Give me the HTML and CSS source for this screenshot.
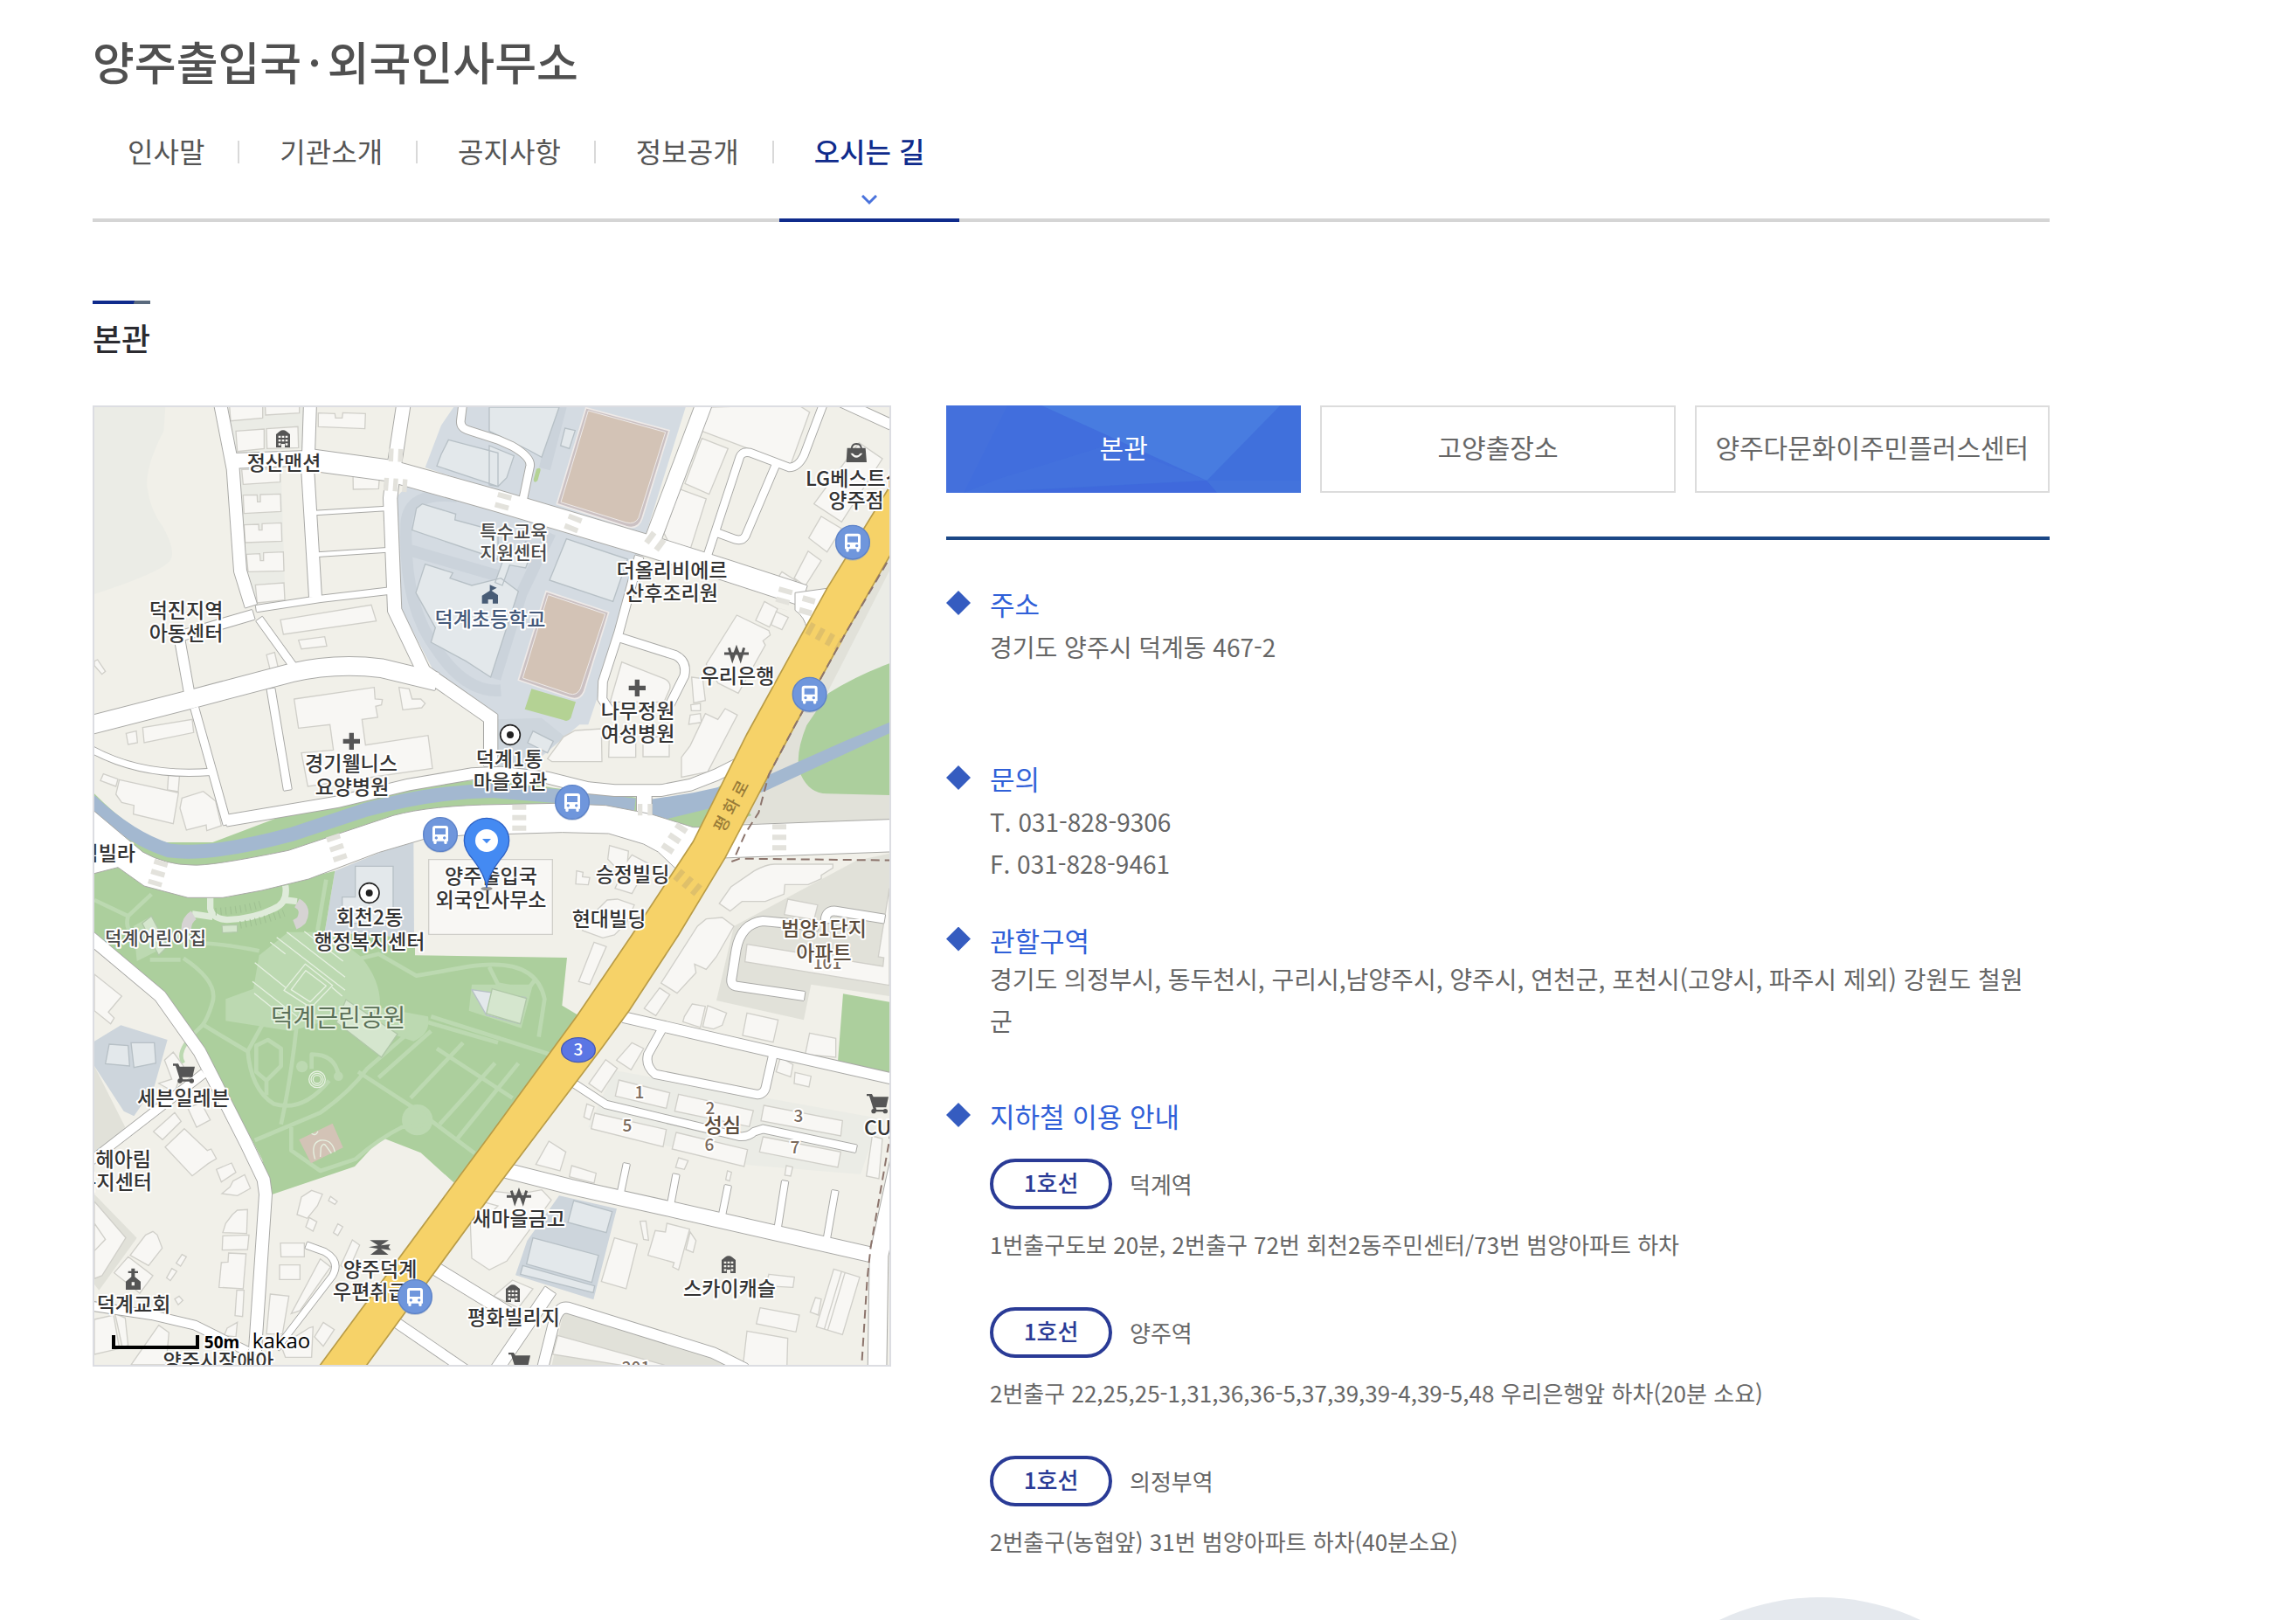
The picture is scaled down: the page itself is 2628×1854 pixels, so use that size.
FILE: index.html
```html
<!DOCTYPE html>
<html lang="ko">
<head>
<meta charset="utf-8">
<meta name="viewport" content="width=device-width, initial-scale=1">
<title>양주출입국·외국인사무소 - 오시는 길</title>
<link rel="stylesheet" href="styles.css">
</head>
<body>
<div class="page">
  <header class="page-header">
    <h1 class="page-title">양주출입국<span class="title-dot">·</span>외국인사무소</h1>
    <nav class="tabs" aria-label="사무소 메뉴">
      <a class="tab" href="#greeting">인사말</a>
      <a class="tab" href="#about">기관소개</a>
      <a class="tab" href="#notice">공지사항</a>
      <a class="tab" href="#open">정보공개</a>
      <a class="tab tab-active" href="#location" aria-current="page">오시는 길
        <svg class="tab-arrow" viewBox="0 0 18 12" aria-hidden="true"><path d="M1 1l8 8 8-8"/></svg>
      </a>
    </nav>
  </header>

  <main>
    <h2 class="section-title">본관</h2>
    <div class="location">
      <div class="map">
        <svg class="map-canvas" viewBox="8 6 910 1096" role="img" aria-label="양주출입국·외국인사무소 약도">
          <defs>
            <g id="bus">
              <circle class="bus-shadow" cy="3" r="60"/>
              <circle class="bus-disc" r="58"/>
              <path class="bus-body" fill-rule="evenodd" d="M-18-30h36q9 0 9 9v44h-4v6q0 4-5 4t-5-4v-6h-26v6q0 4-5 4t-5-4v-6h-4v-44q0-9 9-9zM-18-21v21h36v-21zM-14 7a5 5 0 1 0 .1 0zM14 7a5 5 0 1 0 .1 0z"/>
            </g>
            <g id="apt"><path class="poi" fill-rule="evenodd" d="M-24 30v-45l12-10q12-8 24 0l12 10v45h-18v-12h-12v12zM-16-10v7h8v-7zM-4-10v7h8v-7zM8-10v7h8v-7zM-16 3v7h8v-7zM-4 3v7h8v-7zM8 3v7h8v-7zM-16 16v7h8v-7zM8 16v7h8v-7z"/></g>
            <g id="won"><path class="poi-line" d="M-42 0h84M-26-20l12 40 14-38 14 38 12-40"/></g>
            <g id="plus"><path class="poi" d="M-8-29h16v21h21v16h-21v21h-16v-21h-21v-16h21z"/></g>
            <g id="cart"><path class="poi" d="M-38-32h18l5 10h52l-8 36h-36l3 8h34v7h-42l-17-54h-9z"/><circle class="poi" cx="-14" cy="27" r="8"/><circle class="poi" cx="26" cy="27" r="8"/></g>
            <g id="spot"><circle class="spot-ring" r="34"/><circle class="spot-dot" r="12"/></g>
            <g id="roads" fill="none">
              <path stroke-width="42" d="M455 0L500 230 525 580 562 700"/>
              <path stroke-width="26" d="M590 745L720 925"/>
              <path stroke-width="34" d="M570 730L315 805 352 1010"/>
              <path stroke-width="42" d="M765 0L757 240 783 670"/>
              <path stroke-width="50" d="M500 202L780 192"/>
              <path stroke-width="72" d="M760 198L1040 236 1410 340 1930 495 2200 580 2460 665"/>
              <path stroke-width="46" d="M1087 0L1052 230 1040 330 1055 715 1155 925 1385 1085 1385 1250"/>
              <path stroke-width="14" d="M780 381L1025 366M790 524L1030 508"/>
              <path stroke-width="22" d="M580 710L800 676 1040 648"/>
              <path stroke-width="62" d="M0 1112L350 1022 700 930Q850 895 1010 914L1200 960"/>
              <path stroke-width="27" d="M368 1050L480 1450M630 985L688 1332"/>
              <path stroke-width="22" d="M0 1185Q180 1290 425 1270"/>
              <path stroke-width="38" d="M476 1438L860 1373 1100 1315 1320 1277 1420 1272 1580 1290 1720 1325 1810 1334 1970 1334 2070 1315 2160 1280 2230 1245"/>
              <path stroke-width="50" d="M1912 1340L1912 1430"/>
              <path stroke-width="54" d="M2120 0L1935 490"/>
              <path stroke-width="29" d="M1895 530L1825 790 1770 960 1768 1020 1800 1070M1825 808L2020 870Q2060 890 2050 940L2000 1040"/>
              <path stroke-width="26" d="M2125 540L2240 190Q2248 168 2275 174L2410 225Q2440 225 2460 185L2530 0M2362 220L2260 460Q2250 478 2225 472L2160 448"/>
              <path stroke-width="35" d="M2590 0L2760 78"/>
              <path stroke-width="26" d="M1290 0L1282 65Q1280 90 1310 98L1410 130 1460 152Q1525 190 1520 220L1495 340"/>
              <path stroke-width="42" d="M0 1830L250 2040 385 2230 545 2545 605 2670 612 2720 575 3270"/>
              <path stroke-width="30" d="M0 2615L400 2305"/>
              <path stroke-width="30" d="M0 3102L220 3135 370 3170 550 3260"/>
              <path stroke-width="22" d="M752 2895L815 2918Q870 2950 842 3000L650 3250"/>
              <path stroke-width="44" d="M1195 2975L1480 3150M1590 3050L1400 3330"/>
              <path stroke-width="34" d="M1060 3160L1330 3345"/>
              <path stroke-width="36" d="M1560 3330L1605 3150Q1620 3105 1650 3110L2150 3265 2260 3320"/>
              <path stroke-width="50" d="M1430 2637L1660 2695 2020 2775 2700 2930"/>
              <path stroke-width="22" d="M1830 2720L1852 2615M2002 2760L2022 2652M2178 2800L2200 2690M2370 2840L2396 2675M2538 2880L2568 2708"/>
              <path stroke-width="26" d="M1670 2340L1780 2412 2240 2522Q2270 2524 2290 2505L2320 2496 2640 2564"/>
              <path stroke-width="36" d="M1840 2112L2350 2230 2770 2325"/>
              <path stroke-width="28" d="M1975 2150L1925 2240Q1915 2280 1950 2308L2300 2378Q2325 2376 2330 2350L2355 2240"/>
              <path stroke-width="62" d="M2790 2600L2718 2930 2712 3330"/>
              <path stroke-width="30" d="M2462 2040L2225 2005Q2208 2000 2213 1975L2228 1880Q2245 1790 2320 1782L2510 1800M2535 1790Q2530 1745 2570 1748L2737 1775"/>
            </g>
          </defs>

          <g transform="scale(.33333)">
            <rect class="land" x="0" y="0" width="2780" height="3330"/>
            <g class="ground">
              <path d="M24 18H268L262 100Q200 220 205 290 215 370 260 430 310 520 280 550 240 590 24 660zM480 0H740V160L510 175zM525 230H665L680 690H580L545 580zM1810 2295L2720 2460 2655 2652 2270 2620 1720 2490z"/>
              <path class="ground-dark" d="M2754 520L2390 1180 2200 1450 2754 1435zM2640 1575L2220 1800 2160 2055 2460 2122 2485 2000 2754 2040V1550zM24 2280L130 2490 70 2560 24 2580zM24 2720L170 2870 40 3050 24 3030zM1640 3100L2200 3260V3330H1590z"/>
              <path d="M2754 580L2540 1000 2480 1110 2754 1010z"/>
            </g>
            <g class="campus">
              <path d="M1270 0L1215 80 1160 225 1910 480 2060 0zM1110 278L1062 325 1080 715 1200 945 1410 1075V1260H1510L1690 1108H1720L1780 930 1860 640 1900 520 1600 430z"/>
              <path class="campus-dark" d="M1270 325Q1100 305 1095 420 1085 700 1200 850 1300 1000 1420 990M1110 510L1420 600M1630 0L1570 230M1590 450L1490 660 1400 950"/>
              <path class="campus-civic" d="M850 1610L1120 1500 1122 1840 815 1820zM24 2195L115 2140 275 2190 230 2350 160 2452 125 2435 24 2280zM1620 2725L1818 2770 1738 3082 1470 2998 1510 2880zM1410 1090L1560 1085 1640 1150 1510 1250H1410z"/>
              <path class="field" d="M1712 20L1998 98 1905 400Q1892 440 1850 428L1612 350zM1575 650L1790 722 1705 995Q1690 1028 1655 1015L1480 955z"/>
              <path class="field-court" d="M1720 30L1985 104 1893 398Q1880 422 1850 414L1626 344zM1582 662L1778 728 1693 985Q1680 1010 1655 1002L1495 948z"/>
              <path class="lawn" d="M1525 985L1677 1030 1660 1085Q1650 1100 1635 1092L1502 1055zM1542 230q15-8 14 5l-10 35q-12 12-14-3z"/>
            </g>
            <g class="park">
              <path d="M0 1625L105 1598 345 1690 480 1700 850 1610 815 1820 1125 1840V1900L1647 1908 1630 2072 1690 2108 1700 2200 1258 2680 1145 2578 1010 2525 918 2625 632 2722 600 2600 400 2220 250 2030 0 1830z"/>
              <path d="M2754 898Q2640 940 2545 1000L2470 1110Q2425 1220 2450 1280 2480 1345 2540 1345L2754 1350zM2595 2032L2754 2060V2310L2577 2265z"/>
              <path d="M0 1320Q150 1480 270 1512H430L660 1425 1000 1335 1410 1290 1600 1325 2080 1380 2200 1300 2280 1420 2100 1475 1900 1420 1410 1400 900 1520 400 1610 200 1570 0 1430z"/>
            </g>
            <path class="river-line" stroke-width="48" d="M10 1370Q150 1500 280 1540 420 1560 700 1485L950 1402Q1180 1338 1390 1335L1600 1352 1880 1385"/>
            <path class="river" d="M1930 1365L2080 1342 2180 1320 2340 1280 2600 1165 2754 1100V1138L2330 1335 2140 1395 1990 1432 1930 1415z"/>
            <g class="park-light">
              <path class="fill" d="M590 1900L690 1820H830L940 1905Q1010 1990 1005 2080L1170 2110Q1180 2170 1120 2195L870 2110 700 2160 475 2125V2050L570 2015zM158 1800L220 1765 270 1870 170 1920zM1320 2000L1530 2000 1490 2150 1310 2090z"/>
              <circle class="fill" cx="1133" cy="2465" r="53"/><circle class="fill" cx="737" cy="2282" r="20"/><circle class="fill" cx="862" cy="2315" r="16"/>
              <path d="M24 1710L140 1765 220 1690M140 1765Q120 1830 215 1860M215 1915H320M320 1860Q420 1850 590 1885M330 1910Q450 1990 430 2060T385 2150Q300 2230 330 2270M400 2140L550 2230 600 2140M550 2220Q560 2360 640 2410 740 2440 830 2330M580 2210L620 2190 665 2220V2280L615 2330 580 2300zM615 2330V2380M720 2130Q700 2320 665 2480M575 2535L800 2440Q900 2370 960 2290L1110 2160M1170 2130L1410 2200M930 2300L1130 2430 1330 2580M1180 2480L1080 2490Q1000 2530 920 2600L800 2640 700 2570 700 2490M770 2290L770 2240Q850 2240 862 2310M940 1910L1000 1895 1130 1970 1300 1940Q1540 1900 1570 2050L1550 2180M1380 1940L1410 2000 1510 2020 1540 1980M1180 2110L1620 2250M1000 2320L1180 2160M1110 2390L1290 2200M1210 2480L1400 2270M1270 2530L1480 2270M1200 2220L1460 2390M820 1640L790 1815"/>
              <path class="bright" d="M685 1820L885 1975M650 1838L885 2020M745 1818L878 1920M628 1855L680 1895M575 1925L680 2010M567 1990L720 2110M573 2030L660 2100M840 2010L875 2040M748 1930L842 2003 768 2080 675 2020zM750 1952L820 2005 765 2060 700 2018z"/>
              <circle class="bright" cx="789" cy="2326" r="28"/><circle class="bright" cx="789" cy="2326" r="14"/><circle class="bright" cx="789" cy="2326" r="21"/>
              <path class="walk" d="M422 1690V1740Q430 1775 480 1778 570 1775 640 1740 690 1720 680 1660M430 1768L360 1758M680 1710L720 1715"/>
              <path class="stalls" d="M440 1750Q530 1745 595 1725M525 1795Q610 1780 675 1755"/>
              <path class="porch" d="M340 1825Q335 1780 365 1762M720 1720Q755 1740 735 1780 725 1790 712 1795"/>
              <path class="court" d="M727 2533L842 2477 878 2560 768 2614z"/>
              <path class="bright" d="M782 2600Q765 2545 800 2535 840 2530 850 2575M800 2592L802 2560Q810 2540 820 2555L838 2580M770 2512q14 10 22-8"/>
            </g>

            <g class="building">
              <path d="M487 0H602V55L492 65zM610 0H728V38L612 45zM510 100L607 93V160L515 170zM615 92L723 85 725 157 617 160zM793 38L850 40 852 55H875L877 37 955 40 953 92 793 85zM530 232L662 230V275L535 283zM535 320L583 319 584 343H594V318L663 316 665 376 538 383zM538 422L588 420 589 440H600V418L666 415 668 478 542 483zM546 523L592 521 594 545H605V518L673 515 675 580 552 583zM577 628L675 621 678 680 583 690zM912 243L1003 258 1000 298 913 300zM663 748L975 697 992 752 673 798zM725 818L815 806 822 838 735 848zM615 868L643 860 658 925 630 930zM24 890L35 885 62 925 50 935 24 905z"/>
              <path d="M710 1020L985 980 988 1020 1013 1022 1010 1040 990 1045 997 1083 943 1090 955 1178 1170 1145 1185 1258 757 1320 735 1205 845 1195 833 1108 725 1120zM1070 980L1105 985 1115 1020H1145L1160 1035 1148 1050 1083 1057zM190 1118L360 1090 365 1135 195 1170zM133 1138L168 1130 172 1170 140 1176z"/>
              <path transform="translate(0 1110)" d="M55 167L105 185 98 210 45 190zM110 187L313 232 295 338 158 305 160 275 118 265 98 237zM325 250L398 227 440 260 460 345 410 362 408 342 340 360 318 285zM280 150L318 152 312 228 275 222zM24 855L118 930 72 985 92 1005 80 1025 24 980zM1172 461H1597V718H1172z"/>
              <path transform="translate(1380 0)" d="M755 18L730 100 1035 215 1100 35 1060 10zM730 125L820 160 755 317 672 280zM655 300L745 333 690 507 615 480 600 450zM1115 350L1270 140 1350 195 1210 412zM1140 393L1210 435 1160 515 1097 467zM1095 512L1140 545 1085 632 1047 605zM1005 583L1055 615 1043 638 990 605zM850 732L960 785 965 800 940 820 948 835 855 1000 785 965 745 900zM945 685L990 710 962 773 915 750zM985 720L1027 740 1005 782 968 765zM455 893L600 950Q625 960 620 985L600 1030H415zM695 945L733 950 742 1025 702 1033zM810 1053L852 1075 750 1270 660 1288V1220L690 1180 742 1070 785 1090zM690 1075L725 1070 728 1100 685 1107zM692 1040L725 1035V1060H694z"/>
              <path transform="translate(1380 1110)" d="M200 115L255 40 295 18 385 12 387 125H215zM412 40H503V110H410zM528 40H618V108H528zM413 413L478 432 475 465 490 445 547 475 490 578 432 560 455 510 407 460zM790 612L830 555 910 500Q950 478 980 477H1180V490L1140 515V527L1095 547H1015L1012 580 948 605H868L827 638zM590 885L715 690 745 665 800 660 840 690 780 795 745 838 705 820 710 850 645 920zM585 902L620 925 572 997 532 972zM360 745L402 760 345 890 307 880zM697 957L742 965 725 1038 665 1018 670 1000zM750 963L815 988 800 1030 770 1043 733 1035zM885 988L992 1012 975 1088 870 1065zM1100 1057L1190 1075V1140L1085 1130zM1025 597L1128 617 1115 668 1013 650zM365 640L405 600 440 597 498 617 470 680 430 720 390 730 320 705zM300 500L322 505 320 520 345 523 340 548 297 545zM885 752L1352 828 1355 798 1336 795 1374 560V893L878 812z"/>
              <path transform="translate(0 2220)" d="M265 40L295 12 330 60 300 150 245 120 290 105zM300 220L322 250 258 313 227 285zM333 275L412 350 425 345 443 378 415 395 360 437 267 338zM443 415L495 393 510 425 460 458zM500 455L540 433 560 480 515 505 462 498 490 475zM498 570L515 555 550 553 547 635 465 632 475 600zM465 643L555 640 550 690 463 692zM485 702L545 705 535 825 452 820 460 735 483 733zM513 830H538L533 920 507 917zM770 487L807 500 790 540 755 583 720 570 735 510zM835 508L858 525 850 535 828 522zM762 580L788 595 775 627 750 612zM860 602L877 612 860 642 845 632zM663 668H745V715H665zM660 743H730V793H660zM800 722L835 750 730 900 700 910zM910 657L935 675 895 765 870 745zM628 843L692 850 670 980 615 980zM200 640L225 628 240 640 257 685 210 745 147 710zM140 715L225 780 180 840 92 770zM325 707L340 715 320 747 305 737zM290 755L307 765 285 797 272 787zM345 205L390 185 422 245 375 270zM24 930L90 915 110 1030 24 1050zM95 910L130 925 140 1020 120 1025zM245 950L280 975 270 1086 150 1086zM810 940L848 965 810 1022 780 990zM760 960L775 955 770 1060 680 1060 665 1020zM300 860L315 850 328 865 312 880zM480 960L515 940 510 990 470 985zM24 525L132 650 50 780 24 790zM24 600L62 655 24 695z"/>
              <path transform="translate(1380 2220)" d="M400 38L440 68 385 150 342 120zM490 -20L530 0 487 73 437 40zM445 108L620 152 608 205 433 163zM650 157L907 213 893 268 637 215zM943 195L1213 248 1207 300 933 248zM362 222L608 278 597 337 350 275zM642 288L887 347 875 405 628 345zM940 303L1207 355 1197 408 928 355zM205 318L263 355 243 420 160 398zM283 402L367 428 360 462 275 440zM180 485L213 520 60 730 0 760-60 720-70 480 100 500zM430 650L508 672 470 825 385 800zM610 600L688 620 650 760 630 750 635 735 545 710 570 625 605 630zM518 593L538 592 547 658 530 655zM690 630L710 660 700 700 675 690zM960 775L1048 785 1043 820 950 815zM930 890L1065 915 1053 973 917 945zM885 970L1025 995 1022 1100H870zM1183 757L1272 785 1213 982 1123 955zM1210 765L1150 965M1222 768L1162 968M1315 300L1350 310 1338 447 1295 438zM1050 82L1105 95 1098 132 1047 120zM1000 30L1043 55 1035 97 985 80zM235 985L600 1086V1110L218 1050zM80 795L150 825 100 890 15 850zM650 375L683 385 670 415 640 408zM818 420L832 425 825 455 812 450zM1020 402L1042 407 1035 438 1015 435zM-100 505L30 540-10 580-110 545zM-150 610L-120 640-230 770-270 740zM335 190L360 200 345 245 325 235zM1120 855L1140 860 1130 915 1102 905z"/>
            </g>
            <g class="building-civic">
              <path d="M1240 130L1410 175V290L1200 220 1215 180zM1150 350L1265 385 1262 405 1410 445V540L1115 440 1130 365zM1160 557L1255 587 1245 605 1320 630 1420 605 1480 650 1385 945 1300 890 1180 825 1195 775 1128 655zM1380 18H1620L1560 190 1515 165 1380 100zM1645 470L1855 540 1805 685 1587 612zM1640 90L1675 98 1655 160 1625 150zM1380 150L1465 185 1440 260 1410 290 1380 285zM1505 480L1535 490 1505 570 1450 560 1425 630 1400 620 1425 550z"/>
              <path d="M920 1594H1050V1790H875V1700H920zM1530 1130L1600 1165 1580 1205 1512 1170zM1320 2018L1505 2045 1485 2135 1370 2105zM75 2205L140 2210 145 2280 62 2272zM150 2200H230L235 2270 160 2285z"/>
              <path d="M1670 2742L1802 2780 1782 2852 1650 2817zM1530 2870L1755 2930 1732 3023 1508 2960zM1495 2965L1742 3035 1737 3058 1487 2995z"/>
            </g>
            <g class="building-park"><path d="M888 2052L1065 2170 1010 2250 855 2130zM1390 2015L1508 2048 1487 2135 1370 2100zM188 1790L220 1765 275 1870 245 1900zM462 1797L515 1795V1820L464 1823z"/></g>

            <use class="road-edge" href="#roads"/>
            <use class="road-edge road-edge-low" href="#roads"/>
            <use class="road-top" href="#roads"/>
            <path class="main-road" d="M0 1385L190 1545Q270 1590 360 1590 420 1595 690 1540L1050 1420Q1180 1385 1410 1382L1610 1378 1780 1385 1885 1405 1935 1415 2080 1460H2150L2020 1602 1960 1545 1910 1518 1790 1482 1630 1478 1290 1488 1160 1500 1000 1547 760 1638 600 1677 465 1702H345L195 1662 105 1598 0 1625z"/>
            <path class="main-road" d="M2240 1452L2780 1432V1544L2180 1566z"/>
            <path class="main-road" d="M2430 655L2540 640 2470 780Q2465 740 2430 715z"/>
            <g class="crossing">
              <path stroke-width="44" stroke-dasharray="16 16" d="M1035 182L1085 184M1018 282L1100 288"/>
              <path stroke-width="48" stroke-dasharray="18 18" d="M1483 1382V1475M2376 1450V1545M842 1488L872 1578M255 1575L230 1660M1435 315L1420 370M1678 392L1655 450M2400 640L2380 710"/>
              <path stroke-width="44" stroke-dasharray="20 22" d="M2045 1455L1975 1560M1925 460L1985 505M2480 670L2460 740"/>
              <path stroke-width="40" stroke-dasharray="16 18" d="M1890 1400H1940"/>
            </g>
            <path class="highway" d="M2780 250L2540 640 2265 1140 2080 1510 1870 1830 1680 2110 1380 2520 780 3333H940L1410 2690 1765 2220 1860 2090 2030 1830 2190 1565 2340 1280 2430 1110 2600 800 2780 485z"/>
            <path class="highway-crossing" d="M2475 775L2585 835M2025 1620L2110 1690"/>
            <path class="rail" d="M2770 510L2600 800 2430 1110 2340 1280 2305 1410 2260 1480 2220 1570M2212 1578L2240 1568 2780 1574M2760 2500L2690 2900 2678 3010 2658 3320"/>
            <ellipse class="route" cx="1686" cy="2225" rx="58" ry="42"/>

            <use href="#apt" x="672" y="126"/><use href="#apt" x="2202" y="2961"/><use href="#apt" x="1461" y="3060"/>
            <use href="#won" x="2229" y="864"/><use href="#won" x="1482" y="2728"/>
            <use href="#plus" x="1888" y="982"/><use href="#plus" x="907" y="1165"/>
            <use href="#cart" x="332" y="2304"/><use href="#cart" x="2714" y="2408"/><use href="#cart" x="1484" y="3296"/>
            <use href="#spot" x="1452" y="1143"/><use href="#spot" x="968" y="1686"/>
            <path class="poi-school" d="M1355 692V665L1382 648V628L1406 638 1388 648 1410 663V692H1392V678H1376V692z"/>
            <path class="poi" fill-rule="evenodd" d="M2609 158H2672L2676 207H2606zM2620 176q20 30 42 0h-8q-12 16-26 0z"/>
            <path class="bag-handle" d="M2624 160q2-16 17-16t17 16"/>
            <path class="poi" fill-rule="evenodd" d="M132 3048V3020L151 3004V2991H140V2984H151V2975H163V2984H174V2991H163V3004L183 3020V3048zM152 3022V3034H162V3022z"/>
            <path class="poi" d="M970 2878H1035L1008 2896 1040 2892 1034 2902 1042 2912 1008 2908 1034 2928H972L998 2908 966 2902 998 2896z"/>
            <path class="scale-bar" d="M90 3204V3246H378V3204"/>
          </g>

          <g class="labels">
            <text x="225" y="78">정산맨션</text>
            <text x="113" y="247">덕진지역</text><text x="113" y="273">아동센터</text>
            <g class="label-soft"><text x="488" y="156">특수교육</text><text x="488" y="180">지원센터</text><text x="78" y="621">덕계어린이집</text></g>
            <text class="label-school" x="461" y="257">덕계초등학교</text>
            <text class="label-start" x="822" y="96">LG베스트샵</text><text x="880" y="121">양주점</text>
            <text x="669" y="201">더올리비에르</text><text x="669" y="227">산후조리원</text>
            <text x="744" y="322">우리은행</text>
            <text x="630" y="362">나무정원</text><text x="630" y="388">여성병원</text>
            <text x="302" y="422">경기웰니스</text><text x="303" y="449">요양병원</text>
            <text x="483" y="417">덕계1통</text><text x="484" y="443">마을회관</text>
            <text x="462" y="551">양주출입국</text><text x="462" y="578">외국인사무소</text>
            <text x="323" y="598">회천2동</text><text x="323" y="626">행정복지센터</text>
            <text class="label-end" x="55" y="525">림빌라</text>
            <text class="label-park" x="287" y="715">덕계근린공원</text>
            <text x="624" y="549">승정빌딩</text><text x="597" y="600">현대빌딩</text>
            <g class="label-number"><text x="847" y="649">101</text></g>
            <g class="label-estate"><text x="843" y="611">범양1단지</text><text x="843" y="639">아파트</text><text x="727" y="836">성심</text></g>
            <text class="label-road" transform="translate(743 466) rotate(-62)">평 화 로</text>
            <g class="label-number">
              <text x="632" y="797">1</text><text x="713" y="815">2</text><text x="814" y="824">3</text><text x="618" y="835">5</text><text x="712" y="857">6</text><text x="810" y="860">7</text><text x="628" y="1112">201</text>
            </g>
            <text class="label-start" x="889" y="839">CU</text>
            <text x="110" y="805">세븐일레븐</text>
            <text class="label-end" x="73" y="875">헤아림</text><text class="label-end" x="74" y="901">복지센터</text>
            <text x="53" y="1041">덕계교회</text>
            <text x="335" y="1001">양주덕계</text><text class="label-start" x="281" y="1027">우편취급국</text>
            <text x="494" y="943">새마을금고</text><text x="735" y="1023">스카이캐슬</text><text x="488" y="1056">평화빌리지</text>
            <text x="150" y="1106">양주시장애아</text>
            <text class="label-route" x="562" y="748">3</text>
            <text class="label-scale" x="154" y="1083">50m</text>
            <text class="label-brand" x="222" y="1083">kakao</text>
          </g>

          <g transform="scale(.33333)">
            <use href="#bus" x="2628" y="482"/><use href="#bus" x="2480" y="1004"/><use href="#bus" x="1665" y="1374"/><use href="#bus" x="1212" y="1485"/><use href="#bus" x="1125" y="3072"/>
            <ellipse class="pin-shadow" cx="1371" cy="1671" rx="20" ry="6"/>
            <path class="pin" d="M1371 1668Q1366 1625 1326 1573 1294 1538 1294 1506A77 77 0 0 1 1448 1506Q1448 1538 1416 1573 1376 1625 1371 1668z"/>
            <circle class="pin-eye" cx="1371" cy="1506" r="39"/>
            <path class="pin-mark" d="M1356 1500H1386L1371 1516z"/>
          </g>
        </svg>
      </div>

      <div class="guide">
        <div class="offices">
          <button class="office office-active" type="button" aria-pressed="true">
            <svg class="office-facets" viewBox="0 0 406 100" preserveAspectRatio="none" aria-hidden="true">
              <path fill="#4470dc" d="M0 0h75L22 100H0z"/><path fill="#416edd" d="M70 0h40l188 86L20 100z"/><path fill="#4371dd" d="M60 84L190 44l108 42L20 100z"/><path fill="#487ce0" d="M109 0h273l-84 86z"/><path fill="#3f69dc" d="M40 100l258-14 12 14z"/><path fill="#4373dc" d="M298 86h108v14h-96z"/>
            </svg>
            <span class="office-name">본관</span>
          </button>
          <button class="office" type="button" aria-pressed="false">고양출장소</button>
          <button class="office" type="button" aria-pressed="false">양주다문화이주민플러스센터</button>
        </div>

        <div class="details">
          <section class="info info-address">
            <h3 class="info-title">주소</h3>
            <p>경기도 양주시 덕계동 467-2</p>
          </section>
          <section class="info info-contact">
            <h3 class="info-title">문의</h3>
            <p>T. 031-828-9306<br>F. 031-828-9461</p>
          </section>
          <section class="info info-area">
            <h3 class="info-title">관할구역</h3>
            <p>경기도 의정부시, 동두천시, 구리시,남양주시, 양주시, 연천군, 포천시(고양시, 파주시 제외) 강원도 철원<wbr>군</p>
          </section>
          <section class="info">
            <h3 class="info-title">지하철 이용 안내</h3>
            <ul class="stations">
              <li><div class="station"><span class="line-badge">1호선</span>덕계역</div><p class="route-text">1번출구도보 20분, 2번출구 72번 회천2동주민센터/73번 범양아파트 하차</p></li>
              <li><div class="station"><span class="line-badge">1호선</span>양주역</div><p class="route-text">2번출구 22,25,25-1,31,36,36-5,37,39,39-4,39-5,48 우리은행앞 하차(20분 소요)</p></li>
              <li><div class="station"><span class="line-badge">1호선</span>의정부역</div><p class="route-text">2번출구(농협앞) 31번 범양아파트 하차(40분소요)</p></li>
            </ul>
          </section>
        </div>
      </div>
    </div>
  </main>
</div>
<div class="corner-disc" aria-hidden="true"></div>
</body>
</html>
```
FILE: styles.css
```css
* { box-sizing: border-box; }
body {
  margin: 0;
  background: #fff;
  color: #666;
  font-family: "Noto Sans CJK KR", "Noto Sans", sans-serif;
  font-size: 28px;
  line-height: 48px;
}
h1, h2, h3, p, ul { margin: 0; padding: 0; font-weight: 400; }
ul { list-style: none; }
.page { padding: 32px 282px 60px 106px; }

.page-title { color: #505050; font-size: 52px; font-weight: 500; line-height: 76px; }
.title-dot { margin: 0 7px; }

/* Menu */
.tabs {
  display: flex;
  gap: 6px;
  height: 116px;
  margin-top: 30px;
  border-bottom: 4px solid #d5d5d5;
}
.tab {
  position: relative;
  padding: 10px 40px 0;
  color: #555;
  font-size: 32px;
  line-height: 48px;
  text-decoration: none;
  white-space: nowrap;
}
.tab:not(.tab-active)::after {
  content: "";
  position: absolute;
  top: 23px;
  right: 0;
  width: 2px;
  height: 26px;
  background: #d9d9d9;
}
.tab-active {
  height: 116px;
  border-bottom: 4px solid #0f2b8c;
  color: #0f2b8c;
  font-weight: 500;
}
.tab-arrow {
  display: block;
  width: 18px;
  height: 12px;
  margin: 27px auto 0;
  fill: none;
  stroke: #4a73dc;
  stroke-width: 3;
}

.section-title {
  margin: 90px 0 46px;
  color: #2b2b30;
  font-size: 36px;
  font-weight: 500;
  line-height: 64px;
}
.section-title::before {
  content: "";
  display: block;
  width: 66px;
  height: 4px;
  margin-bottom: 6px;
  background: linear-gradient(105deg, #0f2b8c 71%, #5a6a7e 72%);
}

/* Map and guide side by side */
.location {
  display: grid;
  grid-template-columns: 914fr 1263fr;
  gap: 63px;
  align-items: start;
}
.map { border: 2px solid #dcdde2; }
.map-canvas { display: block; width: 100%; height: auto; }

.land { fill: #f1f0e9; }
.ground { fill: #ebece6; }
.ground-dark { fill: #e1e1d9; }
.campus { fill: #d4dbe2; }
.campus-dark { fill: none; stroke: #cbd3db; stroke-width: 40; }
.campus-civic { fill: #cdd5dc; }
.field { fill: #cbc1c3; stroke: #eeeae8; stroke-width: 5; }
.field-court { fill: #d3c3b6; stroke: #eeeae8; stroke-width: 3; }
.lawn { fill: #b4d294; }
.park { fill: #accf9d; }
.river { fill: #a3b8d0; }
.river-line { fill: none; stroke: #a3b8d0; }
.park-light { fill: none; stroke: #bcd9b1; stroke-width: 14; stroke-linejoin: round; }
.park-light .fill { fill: #bcd9b1; stroke: none; }
.park-light .bright { stroke: #e6f1e1; stroke-width: 4; }
.park-light .walk { stroke: #dfebda; stroke-width: 22; }
.park-light .stalls { stroke: #9fc092; stroke-width: 26; stroke-dasharray: 3 14; }
.park-light .porch { stroke: #d6d3d3; stroke-width: 34; }
.park-light .court { fill: #d3c3b6; stroke: none; }
.building { fill: #f8f7f4; stroke: #d0cfc9; stroke-width: 4; }
.building-civic { fill: #e3e8eb; stroke: #b7c0c6; stroke-width: 4; }
.building-park { fill: #d5e6ce; stroke: #b0c8a8; stroke-width: 4; }
.road-edge { stroke: #a9a9a6; filter: drop-shadow(3px 0 0 #a9a9a6) drop-shadow(-3px 0 0 #a9a9a6); }
.road-edge-low { filter: drop-shadow(0 3px 0 #a9a9a6) drop-shadow(0 -3px 0 #a9a9a6); }
.road-top { stroke: #fff; }
.main-road { fill: #fff; stroke: #a9a9a6; stroke-width: 3; }
.crossing { fill: none; stroke: #e3e2dc; }
.highway { fill: #f6d268; stroke: #b99c47; stroke-width: 5; }
.highway-crossing { fill: none; stroke: #dfc06a; stroke-width: 44; stroke-dasharray: 18 20; }
.rail { fill: none; stroke: #8c746c; stroke-width: 6; stroke-dasharray: 30 18; }
.route { fill: #5b76e4; stroke: #4559b4; stroke-width: 4; }

.poi { fill: #555; }
.poi-line { fill: none; stroke: #555; stroke-width: 9; }
.poi-school { fill: #485c76; }
.bag-handle { fill: none; stroke: #555; stroke-width: 6; }
.spot-ring { fill: #fff; stroke: #222; stroke-width: 5; }
.spot-dot { fill: #222; }
.bus-disc { fill: #6f96dc; stroke: #5c82c8; stroke-width: 4; }
.bus-shadow { fill: #9aa7c0; opacity: .5; }
.bus-body { fill: #fff; }
.scale-bar { fill: none; stroke: #000; stroke-width: 12; }
.pin { fill: #448af2; stroke: #2f62c4; stroke-width: 4; }
.pin-shadow { fill: #333; opacity: .5; }
.pin-eye { fill: #fff; }
.pin-mark { fill: #448af2; }

.labels {
  fill: #333;
  stroke: #fff;
  stroke-width: 4px;
  stroke-linejoin: round;
  paint-order: stroke;
  font-size: 23px;
  font-weight: 500;
  text-anchor: middle;
}
.label-start { text-anchor: start; }
.label-end { text-anchor: end; }
.label-soft { fill: #484848; font-size: 21px; }
.label-school { fill: #44597a; }
.label-park { fill: #5b7058; stroke: #e3f0dd; font-size: 28px; font-weight: 400; }
.label-estate { fill: #5c4c3c; }
.label-number { fill: #7a6a5d; font-size: 19px; }
.label-road { fill: #987b38; stroke: none; font-size: 19px; }
.label-route { fill: #fff; stroke: none; font-size: 19px; }
.label-scale, .label-brand { fill: #000; text-anchor: middle; font-family: "Open Sans", sans-serif; }
.label-scale { font-size: 19px; font-weight: 700; }
.label-brand { font-size: 24px; font-weight: 400; }

/* Office buttons */
.offices { display: grid; grid-template-columns: repeat(3, 1fr); gap: 22px; }
.office {
  height: 100px;
  padding: 0 0 6px;
  border: 2px solid #dcdcdc;
  background: #fff;
  color: #666;
  font: inherit;
  font-size: 30px;
  white-space: nowrap;
}
.office-active {
  position: relative;
  border: 0;
  background: #4070dc;
  color: #fff;
}
.office-facets { position: absolute; inset: 0; width: 100%; height: 100%; }
.office-name { position: relative; }

/* Details */
.details {
  margin-top: 50px;
  padding: 50px 0 0 50px;
  border-top: 4px solid #1b4786;
}
.info-title {
  position: relative;
  margin-bottom: 2px;
  color: #3060d8;
  font-size: 31px;
  line-height: 46px;
}
.info-title::before {
  content: "";
  position: absolute;
  left: -50px;
  top: calc(50% - 15px);
  width: 28px;
  height: 28px;
  background: #355cc0;
  clip-path: polygon(50% 0, 100% 50%, 50% 100%, 0 50%);
}
.info-address { margin-bottom: 104px; }
.info-contact { margin-bottom: 43px; }
.info-area { max-width: 1190px; margin-bottom: 62px; }
.info-area .info-title { margin-bottom: 0; line-height: 41px; }

.stations { display: grid; gap: 46px; margin-top: 26px; }
.station { display: flex; align-items: center; gap: 20px; margin-bottom: 16px; font-size: 26px; line-height: 46px; }
.line-badge {
  width: 140px;
  height: 58px;
  border: 4px solid #2a3b96;
  border-radius: 29px;
  color: #2a3b96;
  font-weight: 500;
  text-align: center;
}
.route-text { padding-bottom: 2px; font-size: 26px; }

/* Large disc rising from the bottom edge */
.corner-disc {
  position: fixed;
  right: 278px;
  bottom: -508px;
  width: 534px;
  height: 534px;
  border-radius: 50%;
  background: #e5e9ee;
}
```
